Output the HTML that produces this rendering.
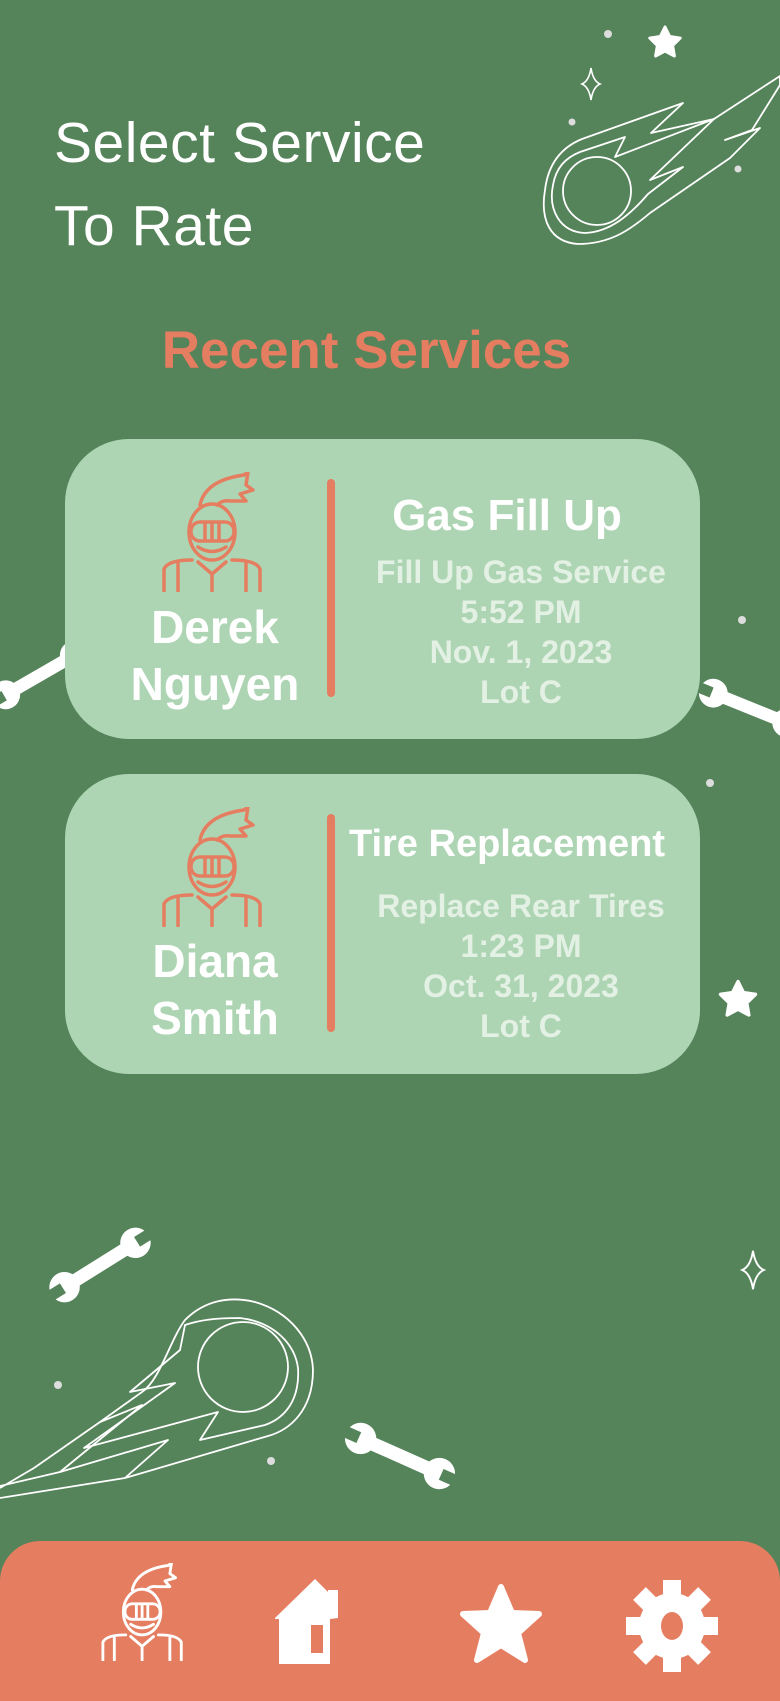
<!DOCTYPE html>
<html><head><meta charset="utf-8"><style>
html,body{margin:0;padding:0}
body{width:780px;height:1688px;background:#55835a;position:relative;overflow:hidden;font-family:"Liberation Sans",sans-serif}
.abs{position:absolute}
.title{left:54px;top:102px;color:#fff;font-size:57px;line-height:83px;letter-spacing:0.5px}
.recent{left:0;width:733px;text-align:center;top:320px;color:#e57d60;font-size:53px;font-weight:bold}
.card{left:65px;width:635px;height:300px;background:#aed5b3;border-radius:64px}
.name{position:absolute;left:45px;width:210px;text-align:center;color:#fff;font-weight:bold;font-size:46px;line-height:57px}
.div{position:absolute;left:262px;top:40px;width:8px;height:218px;background:#e57d60;border-radius:4px}
.right{position:absolute;left:272px;width:340px;text-align:center}
.rt{color:#fff;font-weight:bold;white-space:nowrap}
.rd{left:286px;color:#e3f0e4;font-weight:bold;font-size:32px;line-height:40px;white-space:nowrap}
.nav{left:0;top:1541px;width:780px;height:160px;background:#e57d60;border-radius:40px 40px 0 0}
</style></head><body>
<svg class="abs" style="left:0;top:0" width="780" height="1688" viewBox="0 0 780 1688">
<defs>
<g id="wr">
<rect x="-40" y="-7" width="80" height="14" fill="#fff"/>
<circle cx="-44" cy="0" r="16" fill="#fff"/><circle cx="44" cy="0" r="16" fill="#fff"/>
<rect x="-64" y="-6" width="18" height="12" fill="#55835a"/><rect x="46" y="-6" width="18" height="12" fill="#55835a"/>
</g>
<path id="st" d="M0,-16 L4.7,-6.5 L15.2,-4.9 L7.6,2.5 L9.4,13 L0,8 L-9.4,13 L-7.6,2.5 L-15.2,-4.9 L-4.7,-6.5Z" fill="#fff" stroke="#fff" stroke-width="3" stroke-linejoin="round"/>
<path id="sp" d="M0,-16 Q2,-3 9,0 Q2,3 0,16 Q-2,3 -9,0 Q-2,-3 0,-16Z" fill="none" stroke="#fff" stroke-width="1.6"/>
</defs>
<g fill="#ddd"><circle cx="608" cy="34" r="4"/><circle cx="572" cy="122" r="3.5"/><circle cx="738" cy="169" r="3.5"/><circle cx="742" cy="620" r="4"/><circle cx="710" cy="783" r="4"/><circle cx="58" cy="1385" r="4"/><circle cx="271" cy="1461" r="4"/></g>
<use href="#st" x="665" y="43"/><use href="#st" x="738" y="1000" transform="translate(738 1000) scale(1.15) translate(-738 -1000)"/>
<use href="#sp" x="591" y="84"/><use href="#sp" x="753" y="1270" transform="translate(753 1270) scale(1.2) translate(-753 -1270)"/>
<g fill="none" stroke="#fff" stroke-width="1.8" stroke-linejoin="round">
<circle cx="597" cy="191" r="34"/>
<path d="M582,139 L683,103 L651,133 L714,119 L780,76 L780,85 L752,130 L725,140 L760,128 L730,158 L650,213 C630,230 610,244 578,244 C550,242 540,220 545,190 C548,165 560,148 582,139Z"/>
<path d="M580,152 L625,137 L615,157 L714,119 L650,180 L683,167 L648,194 C630,215 610,232 585,233 C560,232 548,210 553,185 C556,168 565,158 580,152Z"/>
<circle cx="243" cy="1367" r="45"/>
<path d="M185,1320 C205,1300 230,1296 255,1302 C290,1312 312,1340 313,1370 C313,1410 290,1430 268,1436 L125,1478 L168,1440 L60,1472 L142,1405 L100,1422 L142,1392 C160,1380 170,1340 185,1320Z"/>
<path d="M185,1325 C200,1320 215,1318 240,1318 C275,1322 295,1345 298,1368 C300,1400 285,1418 265,1425 L200,1440 L218,1412 L84,1448 L175,1383 L130,1392 L180,1350 Z"/>
<path d="M0,1498 L125,1478"/><path d="M0,1486 L60,1472 M0,1488 L34,1468 L100,1422"/>
</g>
<use href="#wr" transform="translate(100 1265) rotate(-32) scale(0.95)"/>
<use href="#wr" transform="translate(400 1456) rotate(24) scale(0.98)"/>
<use href="#wr" transform="translate(40 675) rotate(-30) scale(0.9)"/>
<use href="#wr" transform="translate(750 708) rotate(22) scale(0.9)"/>
</svg>
<div class="abs title">Select Service<br>To Rate</div>
<div class="abs recent">Recent Services</div>

<div class="abs card" style="top:439px">
<svg style="position:absolute;left:95px;top:33px" width="105" height="120" viewBox="0 0 105 120" fill="none" stroke="#e57d60" stroke-width="3.5" stroke-linecap="round" stroke-linejoin="round">
<path d="M40,33 C44,14 62,6 84,3 L88,0 L86,13 L93,18 L80,22 L86,29 L70,29 C64,28 60,30 57,33"/>
<ellipse cx="52" cy="60" rx="23" ry="28"/>
<rect x="31" y="50" width="43" height="19" rx="9"/>
<path d="M45,51 V68 M52,51 V68 M59,51 V68"/>
<path d="M38,75 Q52,84 66,75"/>
<path d="M4,119 V97 Q8,88 32,88 M100,119 V97 Q96,88 72,88 M18,119 V92 M86,119 V92 M38,90 L52,102 L66,90 M52,102 V119"/>
</svg>
<div class="name" style="top:160px">Derek<br>Nguyen</div>
<div class="div"></div>
<div class="right" style="top:50px"><div class="rt" style="font-size:44px;line-height:54px">Gas Fill Up</div></div>
<div class="right rd" style="top:113px">Fill Up Gas Service<br>5:52 PM<br>Nov. 1, 2023<br>Lot C</div>
</div>

<div class="abs card" style="top:774px">
<svg style="position:absolute;left:95px;top:33px" width="105" height="120" viewBox="0 0 105 120" fill="none" stroke="#e57d60" stroke-width="3.5" stroke-linecap="round" stroke-linejoin="round">
<path d="M40,33 C44,14 62,6 84,3 L88,0 L86,13 L93,18 L80,22 L86,29 L70,29 C64,28 60,30 57,33"/>
<ellipse cx="52" cy="60" rx="23" ry="28"/>
<rect x="31" y="50" width="43" height="19" rx="9"/>
<path d="M45,51 V68 M52,51 V68 M59,51 V68"/>
<path d="M38,75 Q52,84 66,75"/>
<path d="M4,119 V97 Q8,88 32,88 M100,119 V97 Q96,88 72,88 M18,119 V92 M86,119 V92 M38,90 L52,102 L66,90 M52,102 V119"/>
</svg>
<div class="name" style="top:159px">Diana<br>Smith</div>
<div class="div"></div>
<div class="right" style="top:45px"><div class="rt" style="font-size:38px;line-height:50px">Tire Replacement</div></div>
<div class="right rd" style="top:112px">Replace Rear Tires<br>1:23 PM<br>Oct. 31, 2023<br>Lot C</div>
</div>

<div class="abs nav">
<svg style="position:absolute;left:95px;top:22px" width="95" height="98" viewBox="0 0 105 120" fill="none" stroke="#fff" stroke-width="3.5" stroke-linecap="round" stroke-linejoin="round">
<path d="M40,33 C44,14 62,6 84,3 L88,0 L86,13 L93,18 L80,22 L86,29 L70,29 C64,28 60,30 57,33"/>
<ellipse cx="52" cy="60" rx="23" ry="28"/>
<rect x="31" y="50" width="43" height="19" rx="9"/>
<path d="M45,51 V68 M52,51 V68 M59,51 V68"/>
<path d="M38,75 Q52,84 66,75"/>
<path d="M4,119 V97 Q8,88 32,88 M100,119 V97 Q96,88 72,88 M18,119 V92 M86,119 V92 M38,90 L52,102 L66,90 M52,102 V119"/>
</svg>
<svg style="position:absolute;left:275px;top:38px" width="82" height="90" viewBox="0 0 82 90">
<path d="M0,39 L40,0 L53,13 V11 H63 V39 L55,40 V85 H4 V40 H0Z" fill="#fff"/>
<rect x="36" y="46" width="12" height="28" fill="#e57d60"/>
</svg>
<svg style="position:absolute;left:460px;top:42px" width="82" height="80" viewBox="-41 -42 82 80">
<path d="M0,-38 L11,-12 L38,-11 L17,8 L24,35 L0,20 L-24,35 L-17,8 L-38,-11 L-11,-12Z" fill="#fff" stroke="#fff" stroke-width="6" stroke-linejoin="round"/>
</svg>
<svg style="position:absolute;left:625px;top:38px" width="94" height="94" viewBox="-47 -47 94 94">
<g fill="#fff"><circle r="33"/>
<rect x="-9" y="-46" width="18" height="92"/><rect x="-9" y="-46" width="18" height="92" transform="rotate(45)"/><rect x="-9" y="-46" width="18" height="92" transform="rotate(90)"/><rect x="-9" y="-46" width="18" height="92" transform="rotate(135)"/></g>
<ellipse rx="11" ry="14" fill="#e57d60"/>
</svg>
</div>
</body></html>
